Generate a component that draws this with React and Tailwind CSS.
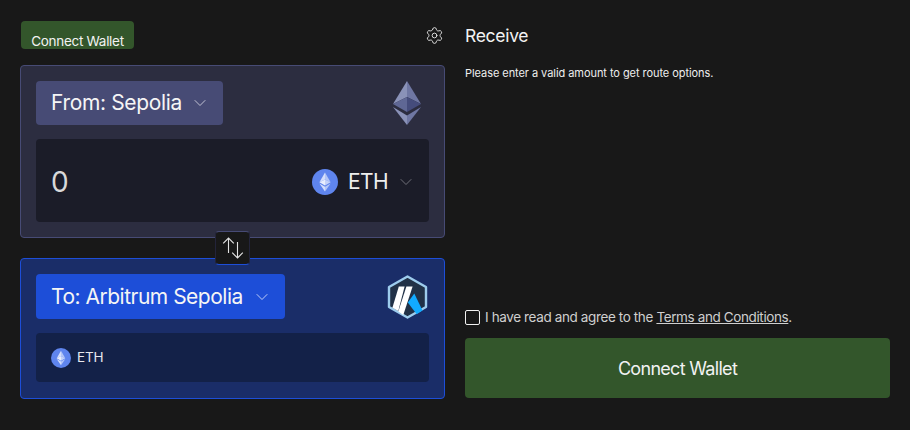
import React from "react";
import { ChevronDown, Settings } from "lucide-react";

const F = { fontFamily: "Inter, sans-serif" };

function EthCoin({ size }) {
  return (
    <svg width={size} height={size} viewBox="0 0 26 26" className="shrink-0">
      <circle cx="13" cy="13" r="13" fill="#5f85ee" />
      <path d="M13 3.5V10.5L7.4 13.2Z" fill="#d5dffb" />
      <path d="M13 3.5V10.5L18.6 13.2Z" fill="#b4c6f7" />
      <path d="M13 10.5L7.4 13.2L13 16.5Z" fill="#e9eefd" />
      <path d="M13 10.5L18.6 13.2L13 16.5Z" fill="#c4d2f9" />
      <path d="M7.4 14.4L13 17.7V22.5Z" fill="#d5dffb" />
      <path d="M18.6 14.4L13 17.7V22.5Z" fill="#b4c6f7" />
    </svg>
  );
}

function EthMark() {
  return (
    <svg width="30" height="44" viewBox="0 0 30 44">
      <path d="M15 0V16L1 23Z" fill="#8a92b8" />
      <path d="M15 0V16L29 23Z" fill="#6f77a3" />
      <path d="M15 16L1 23L15 31Z" fill="#5f6795" />
      <path d="M15 16L29 23L15 31Z" fill="#454c7c" />
      <path d="M1 26L15 34.5V44Z" fill="#8a92b8" />
      <path d="M29 26L15 34.5V44Z" fill="#6f77a3" />
    </svg>
  );
}

function ArbLogo() {
  return (
    <svg width="41" height="44" viewBox="0 0 41 44">
      <path d="M20.5 1.5L39 12V32L20.5 42.5L2 32V12Z" fill="#213147" stroke="#9dcced" strokeWidth="2.4" strokeLinejoin="round" />
      <path d="M27.3 18.5L35.5 35.5L29.7 39.3L20.8 27.5Z" fill="#12aaff" />
      <path d="M11.8 11.5H17.6L11.3 36L5.4 32.7Z" fill="#ffffff" />
      <path d="M19.4 11.5H25.6L16.3 40L11.3 36.6Z" fill="#ffffff" />
    </svg>
  );
}

function SwapIcon() {
  return (
    <svg width="22" height="22" viewBox="0 0 22 22" fill="none" stroke="#e4e4e4" strokeWidth="1.1">
      <path d="M6.5 1V16M1.2 6.3L6.5 1L11.8 6.3" />
      <path d="M15.5 5V21M10.2 15.7L15.5 21L20.8 15.7" />
    </svg>
  );
}

export default function App() {
  return (
    <div style={F} className="w-[910px] h-[430px] bg-[#181818] text-white overflow-hidden flex gap-5 px-5 pt-[21px]">
      <div className="w-[425px] shrink-0 flex flex-col">
        <div className="flex items-center justify-between h-[28px] mb-4">
          <button className="ml-px w-[113px] h-[28px] rounded bg-[#33562b] text-[#f2f2f2] text-[13.5px] tracking-[-0.3px] pt-[8px] leading-[24px]">
            Connect Wallet
          </button>
          <Settings size={19} strokeWidth={1.2} className="text-[#e0e0e0] mr-px" />
        </div>

        <div className="relative flex flex-col gap-5">
          <section className="h-[173px] rounded border border-[#474b75] bg-[#2c2d40] p-[15px]">
            <div className="flex items-center justify-between">
              <div className="w-[187px] h-[44px] rounded bg-[#474b75] flex items-center pl-[15px] gap-2">
                <span className="text-[21px] tracking-[-0.35px] text-[#f5f5f5]">From: Sepolia</span>
                <ChevronDown size={20} strokeWidth={1} className="text-[#d8d8e4]" />
              </div>
              <div className="mr-[7px]"><EthMark /></div>
            </div>
            <div className="mt-[14px] h-[83px] rounded bg-[#1b1c28] flex items-center pl-[15px] pr-[13px] pt-[3px]">
              <span className="text-[28px] text-[#d8d8d8] flex-1">0</span>
              <EthCoin size={26} />
              <span className="ml-[10px] text-[21px] text-[#eeeeee] tracking-[-0.6px]">ETH</span>
              <ChevronDown size={20} strokeWidth={1} className="ml-2 text-[#808088]" />
            </div>
          </section>

          <section className="h-[141px] rounded border border-[#1d4ed8] bg-[#1a2d68] p-[15px]">
            <div className="flex items-center justify-between h-[45px]">
              <div className="w-[249px] h-[45px] rounded bg-[#1d4ed8] flex items-center pl-[15px] gap-[9px]">
                <span className="text-[21px] tracking-[-0.5px] text-[#f5f5f5]">To: Arbitrum Sepolia</span>
                <ChevronDown size={20} strokeWidth={1} className="text-[#dfe6fb]" />
              </div>
              <div className="mr-[1px]"><ArbLogo /></div>
            </div>
            <div className="mt-[14px] h-[49px] rounded bg-[#132148] flex items-center pl-[15px]">
              <EthCoin size={20} />
              <span className="ml-[6px] text-[13.5px] text-[#e8e8ee] tracking-[-0.2px]">ETH</span>
            </div>
          </section>

          <div className="absolute left-[195px] top-[166px] w-[35px] h-[34px] rounded border border-t-[#474b75] border-x-[#23243a] border-b-[#1d4ed8] bg-[#181818] flex items-center justify-center">
            <SwapIcon />
          </div>
        </div>
      </div>

      <div className="w-[425px] shrink-0 flex flex-col">
        <div className="h-[28px] pt-[3px] flex items-center text-[17.5px] tracking-[-0.3px] text-[#f2f2f2]">Receive</div>
        <p className="mt-[16px] text-[11px] leading-[16px] text-[#eeeeee] tracking-[-0.06px]">Please enter a valid amount to get route options.</p>
        <div className="flex-1" />
        <label className="flex items-center gap-[5px] h-[16px] text-[13.5px] tracking-[-0.38px] text-[#cfcfcf]">
          <span className="w-[15px] h-[15px] rounded-[2px] border border-[#f0f0f0] shrink-0" />
          <span>I have read and agree to the <span className="underline">Terms and Conditions</span>.</span>
        </label>
        <button className="mt-[13px] mb-[32px] h-[60px] rounded bg-[#33562b] text-[#f2f2f2] text-[18px] tracking-[-0.7px]">
          Connect Wallet
        </button>
      </div>
    </div>
  );
}
